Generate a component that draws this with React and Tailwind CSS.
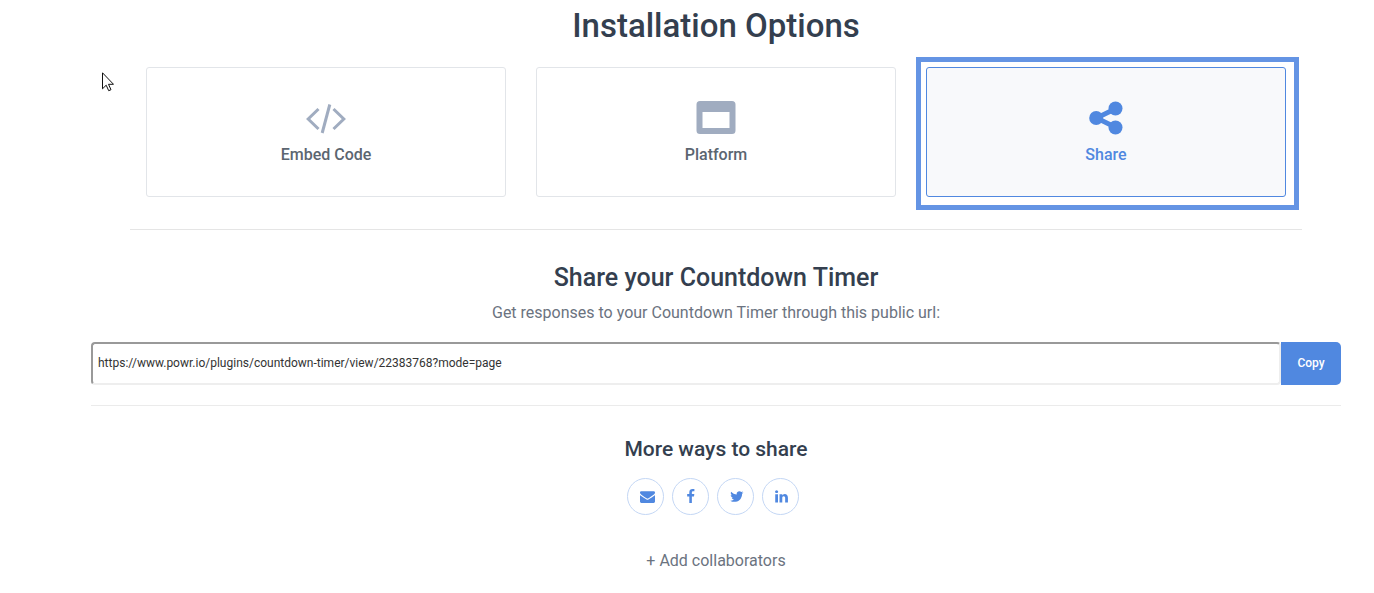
import React from "react";

function CodeIcon() {
  return (
    <svg viewBox="0 0 40 34" className="h-[34px] w-10" fill="none" stroke="currentColor" aria-hidden="true">
      <path d="M12.500 9 2.200 19 12.500 29M27.500 9l10.300 10-10.300 10" strokeWidth="3" />
      <path d="M23.800 4.500 16.200 33" strokeWidth="3" />
    </svg>
  );
}

function WindowIcon() {
  return (
    <svg viewBox="0 0 40 34" className="h-[34px] w-10" fill="currentColor" aria-hidden="true">
      <path
        fillRule="evenodd"
        d="M4 1h32a3.500 3.500 0 0 1 3.500 3.500v26a3.500 3.500 0 0 1-3.500 3.500H4A3.500 3.500 0 0 1 .5 30.500v-26A3.500 3.500 0 0 1 4 1zM6.500 12v16h27V12z"
      />
    </svg>
  );
}

function ShareIcon() {
  return (
    <svg viewBox="0 0 34 36" className="h-9 w-[34px]" fill="currentColor" aria-hidden="true">
      <path d="M27 9.500 7.500 19 27 28.500" fill="none" stroke="currentColor" strokeWidth="4.800" />
      <circle cx="7.200" cy="19" r="7" />
      <circle cx="26.500" cy="9.500" r="7" />
      <circle cx="26.500" cy="28.500" r="7" />
    </svg>
  );
}

function OptionCard({ icon, label, selected }) {
  return (
    <div className="relative">
      <button
        type="button"
        aria-pressed={Boolean(selected)}
        className={
          "flex h-[130px] w-full flex-col items-center rounded-[3px] border pt-[31px] " +
          (selected
            ? "border-[#5088e0] bg-[#f8f9fb] text-[#5088e0]"
            : "border-[#e2e5e9] bg-white text-[#a0acc0]")
        }
      >
        <span className="flex h-9 items-center">{icon}</span>
        <span
          className={
            "mt-2 text-base leading-6 font-medium " + (selected ? "text-[#5088e0]" : "text-[#5b6570]")
          }
        >
          {label}
        </span>
      </button>
      {selected && (
        <div className="pointer-events-none absolute -top-2.5 -right-[13px] -bottom-[13px] -left-2.5 border-5 border-[#6494e4]" />
      )}
    </div>
  );
}

const socials = [
  {
    label: "Email",
    viewBox: "0 0 1792 1792",
    path: "M1792 710v794q0 66-47 113t-113 47h-1472q-66 0-113-47t-47-113v-794q44 49 101 87 362 246 497 345 57 42 92.500 65.500t94.500 48 110 24.500h2q51 0 110-24.500t94.500-48 92.500-65.500q170-123 498-345 57-39 100-87zm0-294q0 79-49 151t-122 123q-376 261-468 325-10 7-42.500 31t-54 38-52 31.500-57.500 27-50 9h-2q-23 0-50-9t-57.500-27-52-31.500-54-38-42.500-31q-91-64-262-182.500t-205-142.500q-62-42-117-115.500t-55-136.500q0-78 41.500-130t118.500-52h1472q65 0 112.500 47t47.500 113z",
  },
  {
    label: "Facebook",
    viewBox: "220 0 1792 1792",
    path: "M1343 12v264h-157q-86 0-116 36t-30 108v189h293l-39 296h-254v759h-306v-759h-255v-296h255v-218q0-186 104-288.500t277-102.500q147 0 228 12z",
  },
  {
    label: "Twitter",
    viewBox: "80 0 1792 1792",
    path: "M1684 408q-67 98-162 167 1 14 1 42 0 130-38 259.500t-115.500 248.500-184.500 210.500-258 146-323 54.500q-271 0-496-145 35 4 78 4 225 0 401-138-105-2-188-64.500t-114-159.500q33 5 61 5 43 0 85-11-112-23-185.500-111.500t-73.500-205.500v-4q68 38 146 41-66-44-105-115t-39-154q0-88 44-163 121 149 294.500 238.500t371.500 99.500q-8-38-8-74 0-134 94.500-228.500t228.500-94.500q140 0 236 102 109-21 205-78-37 115-142 178 93-10 186-50z",
  },
  {
    label: "LinkedIn",
    viewBox: "120 0 1792 1792",
    path: "M477 625v991h-330v-991h330zm21-306q1 73-50.500 122t-135.500 49h-2q-82 0-132-49t-50-122q0-74 51.500-122.500t134.500-48.500 133 48.500 51 122.500zm1166 729v568h-329v-530q0-105-40.500-164.500t-126.500-59.500q-63 0-105.500 34.500t-63.500 85.500q-11 30-11 81v553h-329q2-399 2-647t-1-296l-1-48h329v144h-2q20-32 41-56t56.500-52 87-43.500 114.500-15.500q171 0 275 113.500t104 332.500z",
  },
];

export default function App() {
  return (
    <main className="relative bg-white pr-[33px] pl-[91px] font-['Roboto',sans-serif] text-[#343f4f]">
      <section className="px-[39px] pt-1">
        <h1 className="text-center text-[33px] leading-[43px] font-medium">Installation Options</h1>
        <div className="mt-5 grid grid-cols-3 gap-[30px] px-4">
          <OptionCard icon={<CodeIcon />} label="Embed Code" />
          <OptionCard icon={<WindowIcon />} label="Platform" />
          <OptionCard icon={<ShareIcon />} label="Share" selected />
        </div>
        <hr className="mt-8 border-[#e5e5e5]" />
      </section>

      <section>
        <h2 className="mt-8 text-center text-[25px] leading-8 font-medium">
          Share your Countdown Timer
        </h2>
        <label
          htmlFor="share-url"
          className="mt-[7px] block text-center text-base leading-6 text-[#6b7380]"
        >
          Get responses to your Countdown Timer through this public url:
        </label>
        <div className="mt-[17px] flex h-[43px]">
          <input
            id="share-url"
            type="text"
            readOnly
            value="https://www.powr.io/plugins/countdown-timer/view/22383768?mode=page"
            className="min-w-0 flex-1 rounded-[4px] border-2 border-t-[#999999] border-r-[#eeeeee] border-b-[#eeeeee] border-l-[#999999] px-[5px] pb-0.5 text-xs text-[#333333] outline-none"
          />
          <button
            type="button"
            className="w-[60px] rounded-r-[5px] bg-[#5088e0] pb-0.5 text-xs font-medium text-white"
          >
            Copy
          </button>
        </div>
        <hr className="mt-5 border-[#ebebeb]" />
      </section>

      <section className="flex flex-col items-center">
        <h3 className="mt-[27px] text-[21px] leading-8 font-medium">More ways to share</h3>
        <div className="mt-[13px] mr-[6px] flex gap-2">
          {socials.map(({ label, path, viewBox }) => (
            <button
              key={label}
              type="button"
              aria-label={label}
              className="flex size-[37px] items-center justify-center rounded-full border border-[#c4d7f5] pl-[3px] text-[#5088e0]"
            >
              <svg viewBox={viewBox} className="size-[15px]" fill="currentColor" aria-hidden="true">
                <path d={path} />
              </svg>
            </button>
          ))}
        </div>
        <button type="button" className="mt-[34px] text-base leading-6 text-[#6b7380]">
          + Add collaborators
        </button>
      </section>

      <svg
        viewBox="0 0 12 20"
        className="pointer-events-none absolute top-[72px] left-[102px] h-5 w-3"
        aria-hidden="true"
      >
        <path
          d="M.5.800v16l3.700-3.600 2.500 5.500 2.300-1-2.500-5.400h5z"
          fill="#fff"
          stroke="#111"
          strokeWidth="1"
        />
      </svg>
    </main>
  );
}
